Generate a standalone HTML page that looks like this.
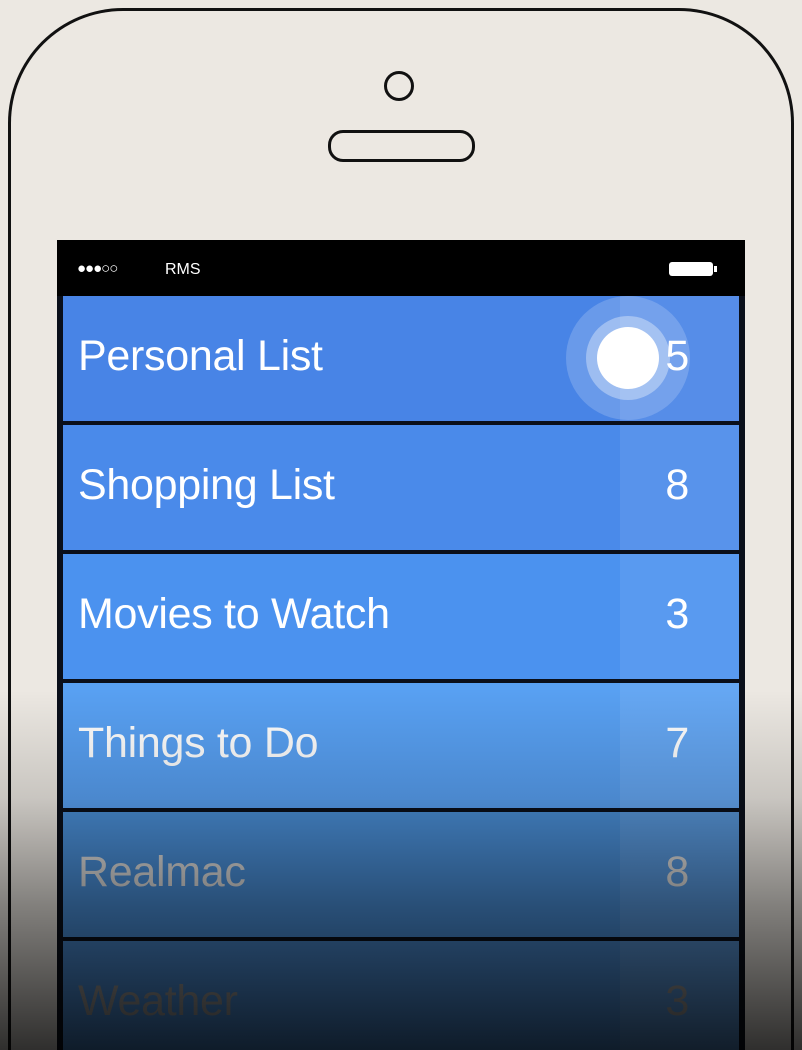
<!DOCTYPE html>
<html style="overflow:hidden;width:802px;height:1050px"><head><style>
body{margin:0;width:802px;height:1050px;overflow:hidden;background:#ece8e2;position:relative;font-family:"Liberation Sans",sans-serif}
.phone{position:absolute;left:8px;top:8px;width:786px;height:1042px;border:3px solid #111;border-bottom:none;border-radius:115px 115px 0 0;box-sizing:border-box}
.screen{position:absolute;left:57px;top:240px;width:688px;height:810px;background:#0a0f1a;overflow:hidden}
.sb{position:absolute;left:0;top:0;width:688px;height:56px;background:#000;color:#fff}
.row{position:absolute;left:6px;width:676px;height:125px;color:#fff;font-size:43px;letter-spacing:-0.3px}
.row .t{position:absolute;left:15px;top:36px}
.row .n{position:absolute;right:50px;top:36px}
.row .c{position:absolute;left:557px;top:0;width:119px;height:125px;background:rgba(255,255,255,0.08)}
.ov{position:absolute;left:0;top:690px;width:802px;height:360px;background:linear-gradient(rgba(0,0,0,0),rgba(0,0,0,0.15) 30%,rgba(0,0,0,0.45) 60%,rgba(0,0,0,0.8))}
</style></head><body>
<div class="phone"></div>
<div style="position:absolute;left:384px;top:71px;width:24px;height:24px;border:3px solid #111;border-radius:50%"></div>
<div style="position:absolute;left:328px;top:130px;width:141px;height:26px;border:3px solid #111;border-radius:15px"></div>
<div class="screen">
<div class="sb"><span style="position:absolute;left:20px;top:20px;font-size:15px;letter-spacing:-1px">●●●○○</span><span style="position:absolute;left:108px;top:21px;font-size:16px">RMS</span>
<div style="position:absolute;left:612px;top:22px;width:44px;height:14px;background:#fff;border-radius:3px"></div><div style="position:absolute;left:657px;top:26px;width:3px;height:6px;background:#fff"></div></div>
<div class="row" style="top:56px;background:#4884e6"><div class="c"></div><span class="t">Personal List</span><span class="n">5</span></div>
<div class="row" style="top:185px;background:#4a8aea"><div class="c"></div><span class="t">Shopping List</span><span class="n">8</span></div>
<div class="row" style="top:314px;background:#4b92ef"><div class="c"></div><span class="t">Movies to Watch</span><span class="n">3</span></div>
<div class="row" style="top:443px;background:#58a0f2"><div class="c"></div><span class="t">Things to Do</span><span class="n">7</span></div>
<div class="row" style="top:572px;background:#4a8fd8;color:#ddd"><div class="c"></div><span class="t">Realmac</span><span class="n">8</span></div>
<div class="row" style="top:701px;background:#4a8ad0;color:#999"><div class="c"></div><span class="t">Weather</span><span class="n">3</span></div>
<div style="position:absolute;left:509px;top:56px;width:124px;height:124px;border-radius:50%;background:rgba(255,255,255,0.18)"></div>
<div style="position:absolute;left:529px;top:76px;width:84px;height:84px;border-radius:50%;background:rgba(255,255,255,0.35)"></div>
<div style="position:absolute;left:540px;top:87px;width:62px;height:62px;border-radius:50%;background:#fff"></div>
</div>
<div class="ov"></div>
</body></html>
